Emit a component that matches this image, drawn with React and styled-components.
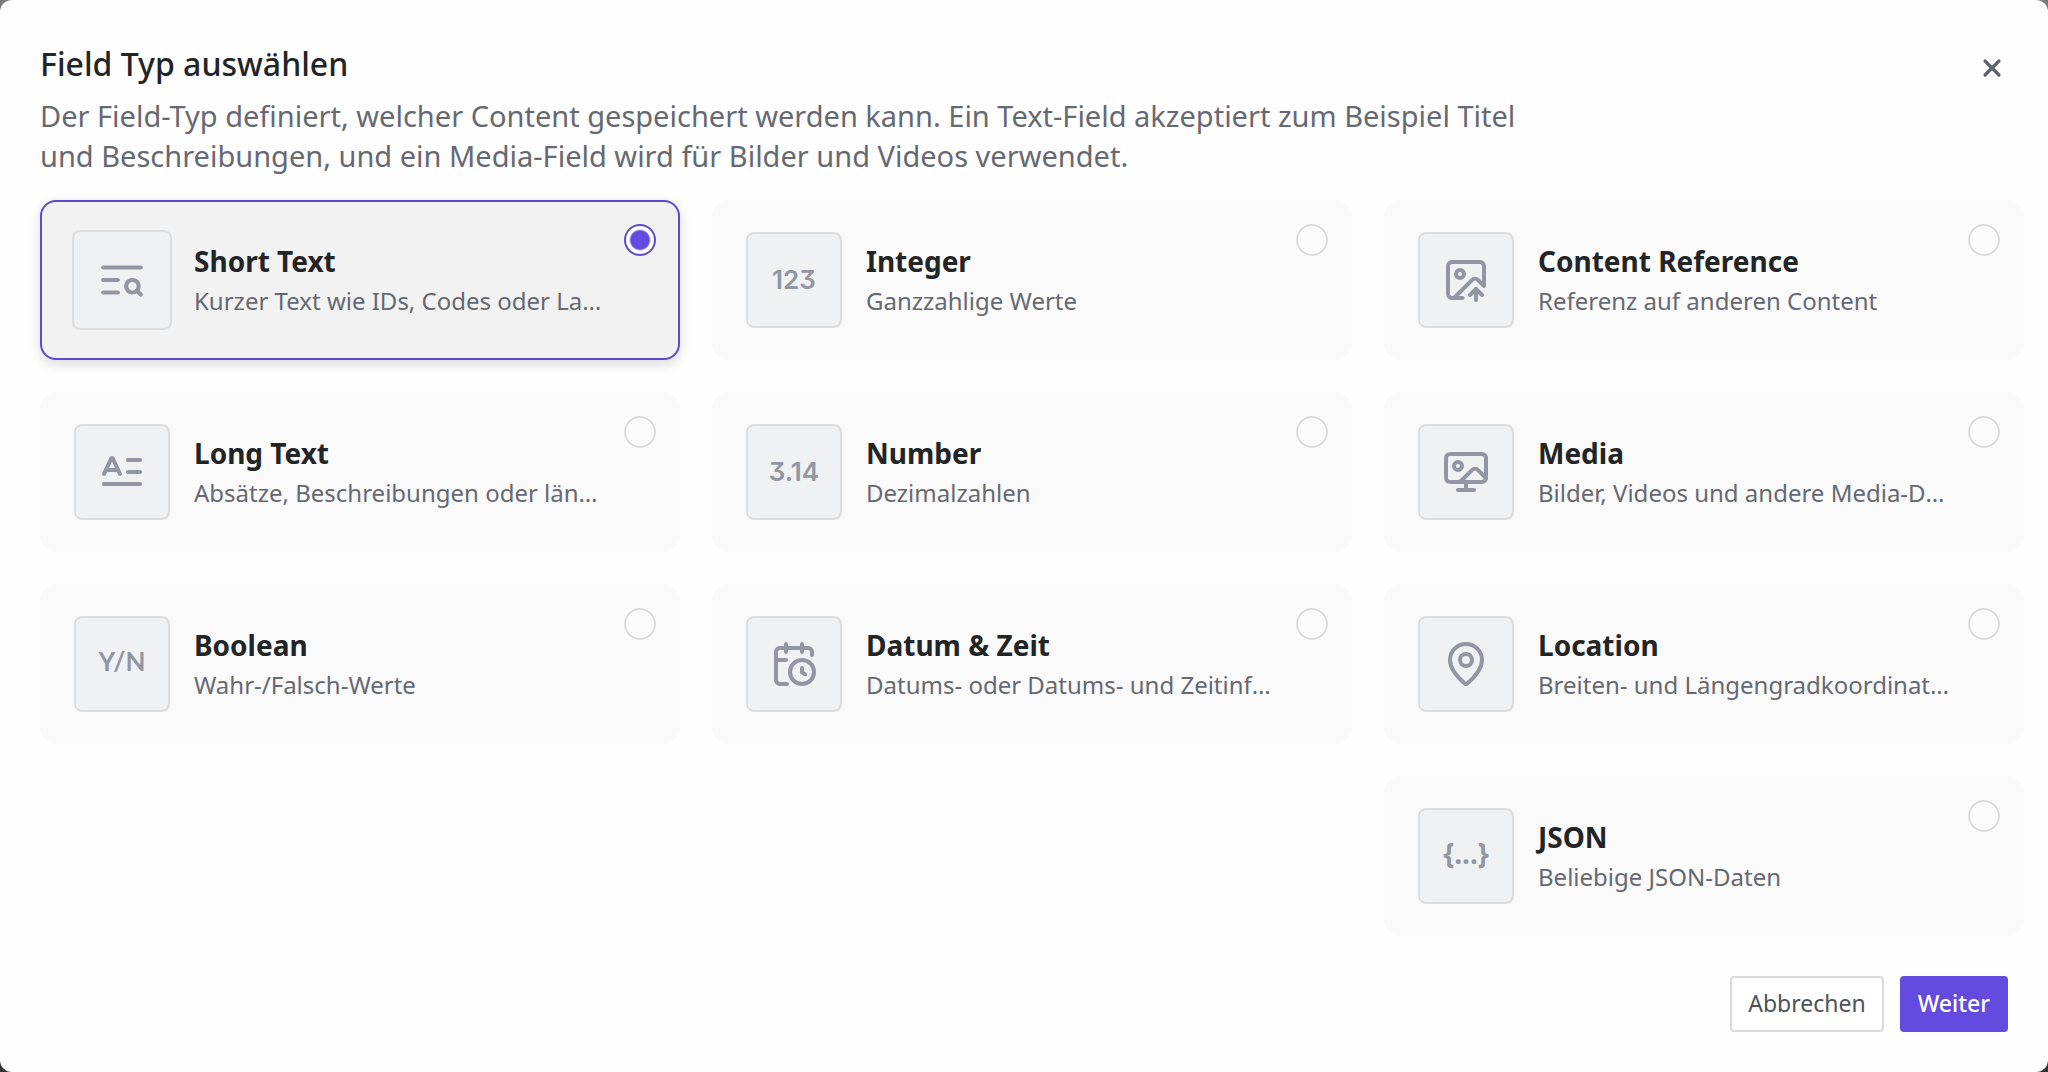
import React, { useState } from 'react'
import styled, { createGlobalStyle } from 'styled-components'
import { CalendarClock, ImageUp, MapPin, Wallpaper, X } from 'lucide-react'

const TextSearchIcon = () => (
  <Drawing viewBox="0 0 24 24" aria-hidden="true">
    <path d="M21 6H3" />
    <path d="M10 12H3" />
    <path d="M10 18H3" />
    <circle cx="17" cy="15" r="3" />
    <path d="m21 19-1.9-1.9" />
  </Drawing>
)

const LetterTextIcon = () => (
  <Drawing viewBox="0 0 24 24" aria-hidden="true">
    <path d="M15 12h6" />
    <path d="M15 6h6" />
    <path d="m3 13 3.553-7.724a.5.5 0 0 1 .894 0L11 13" />
    <path d="M3 18h18" />
    <path d="M3.92 11h6.16" />
  </Drawing>
)

// one array per column
const columns = [
  [
    { id: 'short', name: 'Short Text', text: 'Kurzer Text wie IDs, Codes oder Labels', icon: <TextSearchIcon /> },
    { id: 'long', name: 'Long Text', text: 'Absätze, Beschreibungen oder längere Texte', icon: <LetterTextIcon /> },
    { id: 'boolean', name: 'Boolean', text: 'Wahr-/Falsch-Werte', glyph: 'Y/N', font: 'Lato' },
  ],
  [
    { id: 'integer', name: 'Integer', text: 'Ganzzahlige Werte', glyph: '123', font: 'Inter' },
    { id: 'number', name: 'Number', text: 'Dezimalzahlen', glyph: '3.14', font: 'Inter' },
    { id: 'date', name: 'Datum & Zeit', text: 'Datums- oder Datums- und Zeitinformationen', icon: <CalendarClock /> },
  ],
  [
    { id: 'reference', name: 'Content Reference', text: 'Referenz auf anderen Content', icon: <ImageUp /> },
    { id: 'media', name: 'Media', text: 'Bilder, Videos und andere Media-Dateien', icon: <Wallpaper /> },
    { id: 'location', name: 'Location', text: 'Breiten- und Längengradkoordinaten', icon: <MapPin /> },
    { id: 'json', name: 'JSON', text: 'Beliebige JSON-Daten', glyph: '{...}', font: 'Noto Sans' },
  ],
]

function App() {

  const [selected, setSelected] = useState('short')

  return (
    <>
      <GlobalStyle />
      <Modal role="dialog" aria-labelledby="title">
        <Header>
          <div>
            <Title id="title">Field Typ auswählen</Title>
            <Intro>
              Der Field-Typ definiert, welcher Content gespeichert werden kann. Ein Text-Field akzeptiert zum Beispiel Titel und Beschreibungen, und ein Media-Field wird für Bilder und Videos verwendet.
            </Intro>
          </div>
          <CloseButton type="button" aria-label="Schließen">
            <X strokeWidth={2.75} />
          </CloseButton>
        </Header>

        <Columns role="radiogroup" aria-labelledby="title">
          {columns.map((fields, i) => (
            <Column key={i}>
              {fields.map((field) => (
                <Card key={field.id} htmlFor={field.id} $active={selected === field.id}>
                  <IconBox $active={selected === field.id}>
                    {field.icon || <Glyph $font={field.font} aria-hidden="true">{field.glyph}</Glyph>}
                  </IconBox>
                  <CardText>
                    <Name>{field.name}</Name>
                    <Hint>{field.text}</Hint>
                  </CardText>
                  <Radio
                    type="radio"
                    name="fieldType"
                    id={field.id}
                    checked={selected === field.id}
                    onChange={() => setSelected(field.id)}
                  />
                </Card>
              ))}
            </Column>
          ))}
        </Columns>

        <Footer>
          <Button type="button">Abbrechen</Button>
          <Button type="button" $primary>Weiter</Button>
        </Footer>
      </Modal>
    </>
  )
}

export default App

const GlobalStyle = createGlobalStyle`
  * {
    box-sizing: border-box;
  }
  body {
    margin: 0;
    background: linear-gradient(#7a7a7c, #343436);
    font-family: "Noto Sans", sans-serif;
  }
`

const Modal = styled.div`
  display: flex;
  flex-direction: column;
  min-height: 100vh;
  padding: 40px 24px 40px 40px;
  background: #fefefe;
  border-radius: 12px;
`

const Header = styled.header`
  display: flex;
  justify-content: space-between;
  align-items: flex-start;
  margin-bottom: 24px;
`

const Title = styled.h1`
  margin: 0 0 8px;
  font-size: 32px;
  line-height: 48px;
  font-weight: 500;
  color: #222426;
`

const Intro = styled.p`
  margin: 0;
  max-width: 1500px;
  font-size: 29px;
  line-height: 40px;
  color: #666971;
`

const CloseButton = styled.button`
  display: flex;
  padding: 14px;
  margin-right: 4px;
  border: none;
  background: none;
  color: #5f636b;
  cursor: pointer;
  svg {
    width: 28px;
    height: 28px;
  }
`

const Columns = styled.div`
  display: grid;
  grid-template-columns: repeat(3, minmax(0, 1fr));
  gap: 32px;
`

const Column = styled.div`
  display: flex;
  flex-direction: column;
  gap: 32px;
`

const Card = styled.label`
  position: relative;
  display: flex;
  align-items: center;
  gap: 24px;
  height: 160px;
  padding: 0 72px 0 32px;
  border: 2px solid ${({ $active }) => ($active ? '#6049cf' : 'transparent')};
  border-radius: 16px;
  background: ${({ $active }) => ($active ? '#f2f2f2' : '#fafafa')};
  box-shadow: ${({ $active }) => ($active ? '0 4px 12px rgba(0, 0, 0, 0.15)' : 'none')};
  cursor: pointer;
`

const IconBox = styled.div`
  display: flex;
  flex: none;
  align-items: center;
  justify-content: center;
  width: ${({ $active }) => ($active ? '100px' : '96px')};
  height: ${({ $active }) => ($active ? '100px' : '96px')};
  margin: ${({ $active }) => ($active ? '-2px' : '0')};
  border: 2px solid #dcdddf;
  border-radius: 8px;
  background: #eff1f3;
  color: #9196a2;
  svg {
    width: ${({ $active }) => ($active ? '50px' : '48px')};
    height: ${({ $active }) => ($active ? '50px' : '48px')};
  }
`

const Drawing = styled.svg`
  fill: none;
  stroke: currentColor;
  stroke-width: 2;
  stroke-linecap: round;
  stroke-linejoin: round;
`

const Glyph = styled.span`
  padding-bottom: ${({ $font }) => ($font === 'Inter' ? '0' : '6px')};
  font-family: ${({ $font }) => `"${$font}"`}, sans-serif;
  font-size: ${({ $font }) => ($font === 'Noto Sans' ? '28px' : '26px')};
  line-height: 32px;
  font-weight: ${({ $font }) => ($font === 'Inter' ? 600 : 700)};
  font-feature-settings: ${({ $font }) => ($font === 'Inter' ? '"cv09"' : 'normal')};
`

const CardText = styled.div`
  flex: 1;
  min-width: 0;
  padding-top: 2px;
`

const Name = styled.div`
  font-size: 28px;
  line-height: 40px;
  font-weight: 700;
  color: #222426;
`

const Hint = styled.div`
  overflow: hidden;
  font-size: 24px;
  line-height: 40px;
  color: #666971;
  text-overflow: ellipsis;
  white-space: nowrap;
`

const Radio = styled.input`
  position: absolute;
  top: 22px;
  right: 22px;
  appearance: none;
  width: 32px;
  height: 32px;
  margin: 0;
  border: 2px solid #dcdddf;
  border-radius: 50%;
  background: #fcfcfc;
  cursor: pointer;
  &:checked {
    border-color: #6049cf;
    background: radial-gradient(circle, #644be0 9px, #fff 11px);
  }
`

const Footer = styled.footer`
  display: flex;
  justify-content: flex-end;
  gap: 16px;
  margin-top: 40px;
  padding-right: 16px;
`

const Button = styled.button`
  height: 56px;
  padding: 0 16px 2px;
  border: 2px solid ${({ $primary }) => ($primary ? '#644be0' : '#dadadb')};
  border-radius: 4px;
  background: ${({ $primary }) => ($primary ? '#644be0' : '#fff')};
  color: ${({ $primary }) => ($primary ? '#fff' : '#4f5257')};
  font-family: inherit;
  font-size: 23px;
  font-weight: ${({ $primary }) => ($primary ? 500 : 400)};
  cursor: pointer;
`
